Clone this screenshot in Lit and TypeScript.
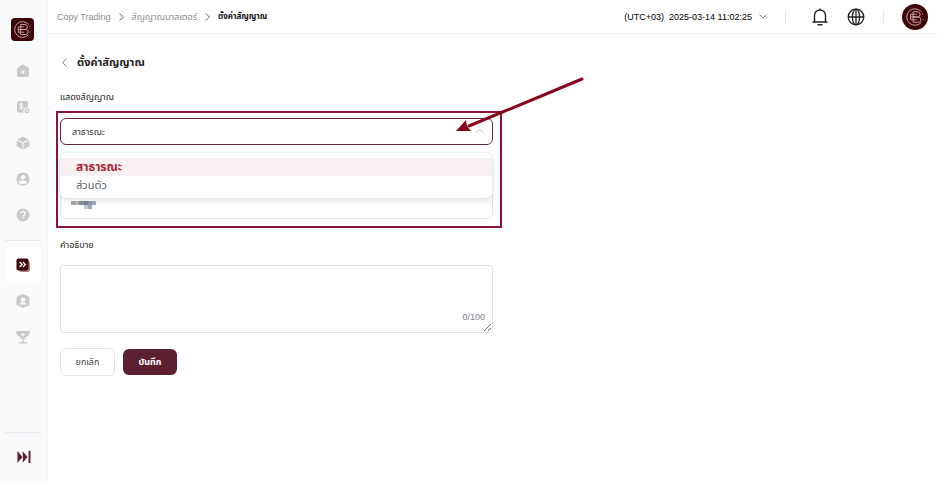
import { LitElement, html, css, svg, nothing } from "lit";
import { customElement, property, state } from "lit/decorators.js";
import { classMap } from "lit/directives/class-map.js";

const emblem = svg`
  <g fill="none" stroke="#d3b3b3" stroke-width=".9" stroke-linecap="round">
    <path d="M18.200 6.400A8.300 8.300 0 1 0 18.200 17.600"/>
    <path d="M10.500 6.800h4a2.600 2.600 0 0 1 0 5.200h-4zM10.500 12h4.800a2.600 2.600 0 0 1 0 5.200h-4.800zM13.200 9.200H7.600v5.600h5.600M7.600 12h4"/>
    <path d="M19.800 8.800v.3M20.200 14.500v.3"/>
  </g>`;

const icons: Record<string, unknown> = {
  home: svg`<path fill="#c9cacc" d="M6 .8a1.8 1.8 0 0 1 2 0l4.400 3a1.600 1.600 0 0 1 .7 1.300v6a2 2 0 0 1-2 2H2.900a2 2 0 0 1-2-2v-6a1.600 1.600 0 0 1 .7-1.300z"/><path stroke="#fff" stroke-width="1.200" d="M7 6.300v3.400M5.300 8h3.400"/>`,
  funds: svg`<rect x="1" y="1" width="11" height="11.500" rx="1.800" fill="#c9cacc"/><path fill="none" stroke="#fff" d="M6.600 4.300C5.800 3.300 3.700 3.500 3.800 4.800s2.900 1 2.900 2.500-2.300 1.600-3.100.5M5.200 2.800v6.800"/><circle cx="10.800" cy="10.800" r="3" fill="#c9cacc" stroke="#f9fafc"/><circle cx="10.800" cy="10.800" r="1" fill="#f9fafc"/>`,
  cube: svg`<path fill="#c9cacc" d="M7 .6 12.700 3.500 7 6.300 1.300 3.500zM.7 4.500 6.500 7.300v6.300L.7 10.600zM13.300 4.500 7.500 7.300v6.300l5.800-3z"/>`,
  user: svg`<circle cx="7" cy="7" r="6.600" fill="#c9cacc"/><circle cx="7" cy="5.200" r="2.200" fill="#fff"/><path fill="#fff" d="M2.900 10.600C4 7.900 10 7.900 11.100 10.600 9 12.700 5 12.700 2.900 10.600z"/>`,
  help: svg`<circle cx="7" cy="7" r="6.500" fill="#c9cacc"/><path fill="none" stroke="#fff" stroke-width="1.300" d="M5 5.600C5 2.700 9.200 2.900 9.100 5.500 9 7 7.100 6.900 7.100 8.600M7.100 9.800v1.300"/>`,
  copy: svg`<rect x="3" y="3" width="11" height="11" rx="2" fill="#a98387"/><rect x=".5" y=".5" width="12" height="12" rx="2" fill="#40060c"/><path fill="none" stroke="#fff" stroke-width="1.300" d="m3.600 4 2.500 2.500L3.600 9M6.900 4l2.500 2.500L6.900 9"/>`,
  member: svg`<path fill="#c9cacc" d="M6 .4a2.500 2.500 0 0 1 2 0l4.500 2a1.500 1.500 0 0 1 1 1.400v6.400a1.500 1.500 0 0 1-1 1.400l-4.500 2a2.500 2.500 0 0 1-2 0l-4.500-2a1.500 1.500 0 0 1-1-1.400V3.800a1.500 1.500 0 0 1 1-1.400z"/><circle cx="7" cy="5.700" r="2.200" fill="#fff"/><path fill="#fff" d="M3.200 10.400c1-2.400 6.600-2.400 7.600 0z"/>`,
  trophy: svg`<path fill="#c9cacc" d="M.4 1h13.200v1.600c0 2.400-1.600 3.900-3.600 4.400-.5 1.200-1.300 1.900-2.300 2.200V12H11v1.500H3V12h3.300V9.200C5.300 8.900 4.500 8.200 4 7 2 6.500.4 5 .4 2.600z"/><path stroke="#fff" d="M7 3v3.400M5.300 4.700h3.400"/>`,
};

const mosaic = [
  ["#a9a5a8", "#b5b7bd", "#8a8f9c", "#7b8493", "#8d9aab", "#a0adba"],
  ["", "", "", "#c2c9d3", "#a2aab5", ""],
];

@customElement("nav-item")
class NavItem extends LitElement {
  @property() icon = "home";
  @property() label = "";
  @property({ type: Boolean }) active = false;
  static styles = css`
    :host { display: block; }
    .item { display: flex; align-items: center; justify-content: center; height: 36px; margin: 0 6px 0 5px; border-radius: 6px; }
    .active { background: #fff; }
    svg { width: 14px; height: 14px; }
  `;
  render() {
    return html`<a href="#" class=${classMap({ item: true, active: this.active })} aria-label=${this.label}>
      <svg viewBox="0 0 14 14">${icons[this.icon]}</svg></a>`;
  }
}

@customElement("app-root")
class AppRoot extends LitElement {
  @state() private visibility = "public";
  @state() private open = true;
  @state() private description = "";

  private options = [
    { value: "public", label: "สาธารณะ" },
    { value: "private", label: "ส่วนตัว" },
  ];

  static styles = css`
    * { box-sizing: border-box; }
    :host { display: flex; min-height: 100vh; background: #fff; color: #222; font-family: "Liberation Sans", "Noto Sans Thai", sans-serif; font-size: 9px; line-height: 16px; }
    a { color: inherit; text-decoration: none; }
    button { font: inherit; cursor: pointer; }
    .sidebar { display: flex; flex-direction: column; flex: none; width: 48px; background: #f9fafc; border-right: 1px solid #f3f4f6; padding-top: 18px; }
    .logo { width: 23px; height: 23px; margin: 0 0 12px 11px; background: #3d0307; border-radius: 4px; }
    .logo svg { display: block; }
    .rule { border: 0; border-top: 1px solid #e9eaed; margin: 7px 6px 6px 5px; }
    .foot { margin-top: auto; }
    .foot .rule { margin: 0 6px 0 5px; }
    .collapse { display: flex; align-items: center; justify-content: center; width: 100%; height: 48px; padding: 0; border: 0; background: none; }
    .collapse svg { width: 14px; height: 14px; }
    .page { flex: 1; min-width: 0; }
    .header { display: flex; align-items: center; justify-content: space-between; height: 34px; padding: 0 9px; border-bottom: 1px solid #f1f1f3; }
    .crumbs { display: flex; align-items: center; gap: 8px; color: #8c8c8c; }
    .crumbs svg { width: 5px; height: 8px; }
    .current { color: #111; font-size: 8px; font-weight: 700; }
    .tools { display: flex; align-items: center; gap: 18px; }
    .time { display: flex; align-items: center; gap: 7px; padding: 0; border: 0; background: none; color: #000; white-space: pre; }
    .time svg { width: 8px; height: 5px; }
    .bar { width: 1px; height: 12px; background: #e4e4e6; }
    .time + .bar { margin-right: 7px; }
    .icon { display: flex; padding: 0; border: 0; background: none; }
    .icon svg { width: 18px; height: 18px; }
    .avatar svg { width: 26px; height: 26px; border-radius: 50%; background: #3d0307; }
    .content { padding: 20px 12px; }
    .title { display: flex; align-items: center; gap: 10px; margin: 0; font-size: 11px; line-height: 16px; font-weight: 700; }
    .title svg { display: block; width: 5px; height: 9px; }
    .title a { margin-left: 2px; }
    .form { max-width: 433px; }
    .label { display: block; margin-top: 19px; }
    .group { position: relative; margin-top: 13px; }
    .marker { position: absolute; inset: -7px -9px -9px -4px; border: 2px solid #8b1735; pointer-events: none; }
    .arrow { position: absolute; top: -42px; right: -92px; width: 130px; height: 58px; pointer-events: none; }
    .select { position: relative; }
    select { display: block; width: 100%; height: 27px; padding: 0 28px 0 11px; appearance: none; border: 1px solid #632b38; border-radius: 6px; background: #fff; color: #333; font: inherit; outline: 0; }
    .caret { position: absolute; top: 10px; right: 9px; width: 9px; height: 6px; pointer-events: none; }
    .menu { position: absolute; top: 35px; left: 0; right: 1px; z-index: 1; margin: 0; padding: 5px 0 4px; list-style: none; background: #fff; border-radius: 5px; box-shadow: 0 0 1px #bbb, 0 2px 7px #00000020; }
    .option { height: 18px; padding: 0 16px; color: #606266; font-size: 11px; line-height: 18px; cursor: pointer; }
    .chosen { background: #f9f0f1; color: #ad2533; font-size: 12px; font-weight: 700; }
    .name { position: relative; margin-top: 45px; }
    .name input { display: block; width: 100%; height: 29px; border: 1px solid #e2e3e8; border-radius: 6px; background: #fff; outline: 0; }
    .mosaic { position: absolute; left: 11px; bottom: 10px; width: 25px; height: 8px; }
    .after { margin-top: 18px; }
    .area { position: relative; margin-top: 12px; }
    textarea { display: block; width: 100%; height: 68px; padding: 8px 12px; border: 1px solid #e2e3e6; border-radius: 3px; background: #fff; font: inherit; resize: vertical; outline: 0; }
    .count { position: absolute; right: 8px; bottom: 8px; color: #7d818a; }
    .actions { display: flex; align-items: center; gap: 8px; margin-top: 15px; }
    .button { height: 28px; padding: 0; width: 55px; border: 1px solid #e2e3e6; border-radius: 6px; background: #fff; color: #444; }
    .primary { height: 26px; border: 0; background: #5d2030; color: #fff; font-weight: 700; width: 54px; }
  `;

  private choose(value: string) {
    this.visibility = value;
    this.open = false;
  }

  render() {
    const chevron = html`<svg viewBox="0 0 5 8"><path d="m.5.5 4 3.500-4 3.500" fill="none" stroke="#777" /></svg>`;
    return html`
      <nav class="sidebar">
        <a class="logo" href="#" aria-label="Home"><svg viewBox="0 0 24 24">${emblem}</svg></a>
        <nav-item icon="home" label="Home"></nav-item>
        <nav-item icon="funds" label="Funds"></nav-item>
        <nav-item icon="cube" label="Products"></nav-item>
        <nav-item icon="user" label="Profile"></nav-item>
        <nav-item icon="help" label="Help"></nav-item>
        <hr class="rule" />
        <nav-item icon="copy" label="Copy Trading" active></nav-item>
        <nav-item icon="member" label="Members"></nav-item>
        <nav-item icon="trophy" label="Rewards"></nav-item>
        <div class="foot">
          <hr class="rule" />
          <button class="collapse" aria-label="Expand">
            <svg viewBox="0 0 14 14"><path fill="#5d2030" d="M.5 1 5.500 7l-5 6zM5.500 1l5 6-5 6zM11.500 1h2v12h-2z"/><path d="M5.500 1v12" stroke="#f9fafc" stroke-width=".6"/></svg>
          </button>
        </div>
      </nav>
      <div class="page">
        <header class="header">
          <nav class="crumbs">
            <a href="#">Copy Trading</a>${chevron}<a href="#">สัญญาณมาสเตอร์</a>${chevron}
            <span class="current">ตั้งค่าสัญญาณ</span>
          </nav>
          <div class="tools">
            <button class="time">(UTC+03)  2025-03-14 11:02:25<svg viewBox="0 0 8 5"><path d="m.5.5 3.500 3.500L7.500.5" fill="none" stroke="#888"/></svg></button>
            <span class="bar"></span>
            <button class="icon" aria-label="Notifications"><svg viewBox="0 0 18 18" fill="none" stroke="#222" stroke-width="1.400"><path d="M1.500 14h15M3.500 14V7.500a5.500 5.500 0 0 1 11 0V14M9 2V.5M6.500 16.700h5"/></svg></button>
            <button class="icon" aria-label="Language"><svg viewBox="0 0 18 18" fill="none" stroke="#222" stroke-width="1.300"><circle cx="9" cy="9" r="7.800"/><ellipse cx="9" cy="9" rx="3.600" ry="7.800"/><path d="M1.200 9h15.600M9 1.200v15.600"/></svg></button>
            <span class="bar"></span>
            <button class="icon avatar" aria-label="Account"><svg viewBox="-1 -1 26 26">${emblem}</svg></button>
          </div>
        </header>
        <main class="content">
          <h1 class="title"><a href="#" aria-label="Back"><svg viewBox="0 0 5 9"><path d="m4.500.5-4 4 4 4" fill="none" stroke="#888"/></svg></a>ตั้งค่าสัญญาณ</h1>
          <form class="form" @submit=${(e: Event) => e.preventDefault()}>
            <label class="label" for="visibility">แสดงสัญญาณ</label>
            <div class="group">
              <div class="select">
                <select id="visibility" .value=${this.visibility}
                  @mousedown=${(e: Event) => { e.preventDefault(); this.open = !this.open; }}
                  @change=${(e: Event) => this.choose((e.target as HTMLSelectElement).value)}>
                  ${this.options.map((o) => html`<option value=${o.value} ?selected=${o.value === this.visibility}>${o.label}</option>`)}
                </select>
                <svg class="caret" viewBox="0 0 9 6"><path d="m.5 5 4-4 4 4" fill="none" stroke="#bfc2c8"/></svg>
                ${this.open ? html`<ul class="menu" role="listbox">
                  ${this.options.map((o) => html`<li role="option" aria-selected=${o.value === this.visibility}
                    class=${classMap({ option: true, chosen: o.value === this.visibility })}
                    @click=${() => this.choose(o.value)}>${o.label}</li>`)}
                </ul>` : nothing}
              </div>
              <div class="name">
                <input type="text" aria-label="Name" />
                <svg class="mosaic" viewBox="0 0 24 8" preserveAspectRatio="none" shape-rendering="crispEdges">
                  ${mosaic.map((row, y) => row.map((c, x) => c ? svg`<rect x=${x * 4} y=${y * 4} width="4" height="4" fill=${c}/>` : nothing))}
                </svg>
              </div>
              <div class="marker"></div>
              <svg class="arrow" viewBox="0 0 130 58"><path d="M127 3 14 50" stroke="#86051d" stroke-width="3" stroke-linecap="round"/><path d="m1 55 10-11 1 6 4 5z" fill="#86051d"/></svg>
            </div>
            <label class="label after" for="description">คำอธิบาย</label>
            <div class="area">
              <textarea id="description" maxlength="100" .value=${this.description}
                @input=${(e: Event) => { this.description = (e.target as HTMLTextAreaElement).value; }}></textarea>
              <span class="count">${this.description.length}/100</span>
            </div>
            <div class="actions">
              <button type="button" class="button">ยกเลิก</button>
              <button type="submit" class="button primary">บันทึก</button>
            </div>
          </form>
        </main>
      </div>`;
  }
}
